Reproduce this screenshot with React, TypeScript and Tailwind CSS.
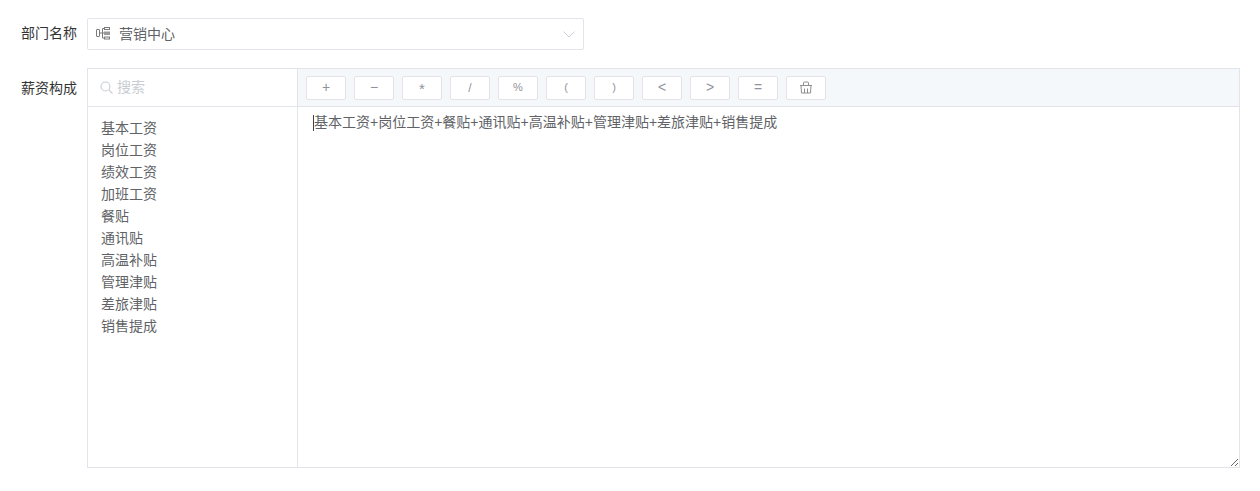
import React from "react";

const font = { fontFamily: '"Liberation Sans", "Noto Sans CJK SC", sans-serif' };
const items = ["基本工资", "岗位工资", "绩效工资", "加班工资", "餐贴", "通讯贴", "高温补贴", "管理津贴", "差旅津贴", "销售提成"];
const ops: [string, string][] = [
  ["+", "text-[14px]"],
  ["−", "text-[14px]"],
  ["*", "text-[15px] pt-[3px]"],
  ["/", "text-[12px]"],
  ["%", "text-[11px]"],
  ["(", "text-[11px]"],
  [")", "text-[11px]"],
  ["<", "text-[14px]"],
  [">", "text-[14px]"],
  ["=", "text-[14px]"],
];
const formula = "基本工资+岗位工资+餐贴+通讯贴+高温补贴+管理津贴+差旅津贴+销售提成";

function Tree() {
  return (
    <svg width="16" height="16" viewBox="0 0 16 16" fill="none" stroke="#7a7a7a" strokeWidth="1">
      <rect x="1.5" y="3.5" width="3" height="7" rx="0.5" />
      <path d="M4.5 7H9M7.5 2.5V12M7.5 2.5H9M7.5 12H9" />
      <rect x="9.5" y="1.5" width="5" height="2" />
      <rect x="9" y="5.5" width="6" height="3.5" fill="#9a9a9a" stroke="none" />
      <rect x="9.5" y="11" width="5" height="2" />
    </svg>
  );
}

function Basket() {
  return (
    <svg width="14" height="14" viewBox="0 0 14 14" fill="none" stroke="#8f8f8f" strokeWidth="1">
      <path d="M4.5 4.5V2a1 1 0 0 1 1-1h3a1 1 0 0 1 1 1v2.5" />
      <path d="M1 4.5h12" />
      <path d="M2 4.5l.5 7.5h9l.5-7.5" />
      <path d="M5.5 7.5V12M8.5 7.5V12" />
    </svg>
  );
}

export default function App() {
  return (
    <div className="w-[1260px] h-[491px] bg-white overflow-hidden pt-[18px] pl-[21px] pr-[20px] text-[14px]" style={font}>
      <div className="flex items-center">
        <span className="w-[66px] shrink-0 text-[#333] leading-[30px] pb-[2px]">部门名称</span>
        <div className="w-[497px] h-[32px] border border-[#e2e4ea] rounded-[2px] flex items-center pl-[7px] pr-[8px] text-[#606266]">
          <Tree />
          <span className="ml-[8px] leading-[30px] pb-[2px] h-[30px]">营销中心</span>
          <svg className="ml-auto" width="12" height="7" viewBox="0 0 12 7" fill="none" stroke="#ccd1da" strokeWidth="1">
            <path d="M0.5 0.5l5.5 5.5 5.5-5.5" />
          </svg>
        </div>
      </div>

      <div className="flex mt-[18px]">
        <span className="w-[66px] shrink-0 text-[#333] leading-[40px]">薪资构成</span>
        <div className="w-[1153px] h-[400px] border border-[#e2e4ea] flex">
          <div className="w-[210px] shrink-0 border-r border-[#e2e4ea] flex flex-col">
            <div className="h-[38px] shrink-0 border-b border-[#e2e4ea] flex items-center pl-[12px] text-[#c8ccd3]">
              <svg className="-mt-[1px]" width="13" height="13" viewBox="0 0 13 13" fill="none" stroke="#c8ccd2" strokeWidth="1.1">
                <circle cx="5.5" cy="5.5" r="4.5" />
                <path d="M9 9l3.5 3.5" />
              </svg>
              <span className="ml-[4px]">搜索</span>
            </div>
            <ul className="pt-[10px] pl-[13px] text-[#606266] leading-[22px]">
              {items.map((t) => (
                <li key={t}>{t}</li>
              ))}
            </ul>
          </div>
          <div className="flex-1 flex flex-col min-w-0">
            <div className="h-[38px] shrink-0 bg-[#f5f8fb] border-b border-[#e2e4ea] flex items-center pl-[8px] gap-[8px]">
              {ops.map(([o, size]) => (
                <button key={o} className={`w-[40px] h-[24px] bg-white border border-[#e2e4ea] rounded-[2px] text-[#909399] flex items-center justify-center ${size}`}>
                  {o}
                </button>
              ))}
              <button className="w-[40px] h-[24px] bg-white border border-[#e2e4ea] rounded-[2px] flex items-center justify-center">
                <Basket />
              </button>
            </div>
            <div className="relative flex-1 flex">
              <textarea
                defaultValue={formula}
                className="flex-1 w-full block pl-[16px] pr-[10px] pt-[4px] text-[#606266] leading-[22px] outline-none resize"
              />
              <span className="absolute left-[15px] top-[8px] w-px h-[16px] bg-[#444]" />
            </div>
          </div>
        </div>
      </div>
    </div>
  );
}
